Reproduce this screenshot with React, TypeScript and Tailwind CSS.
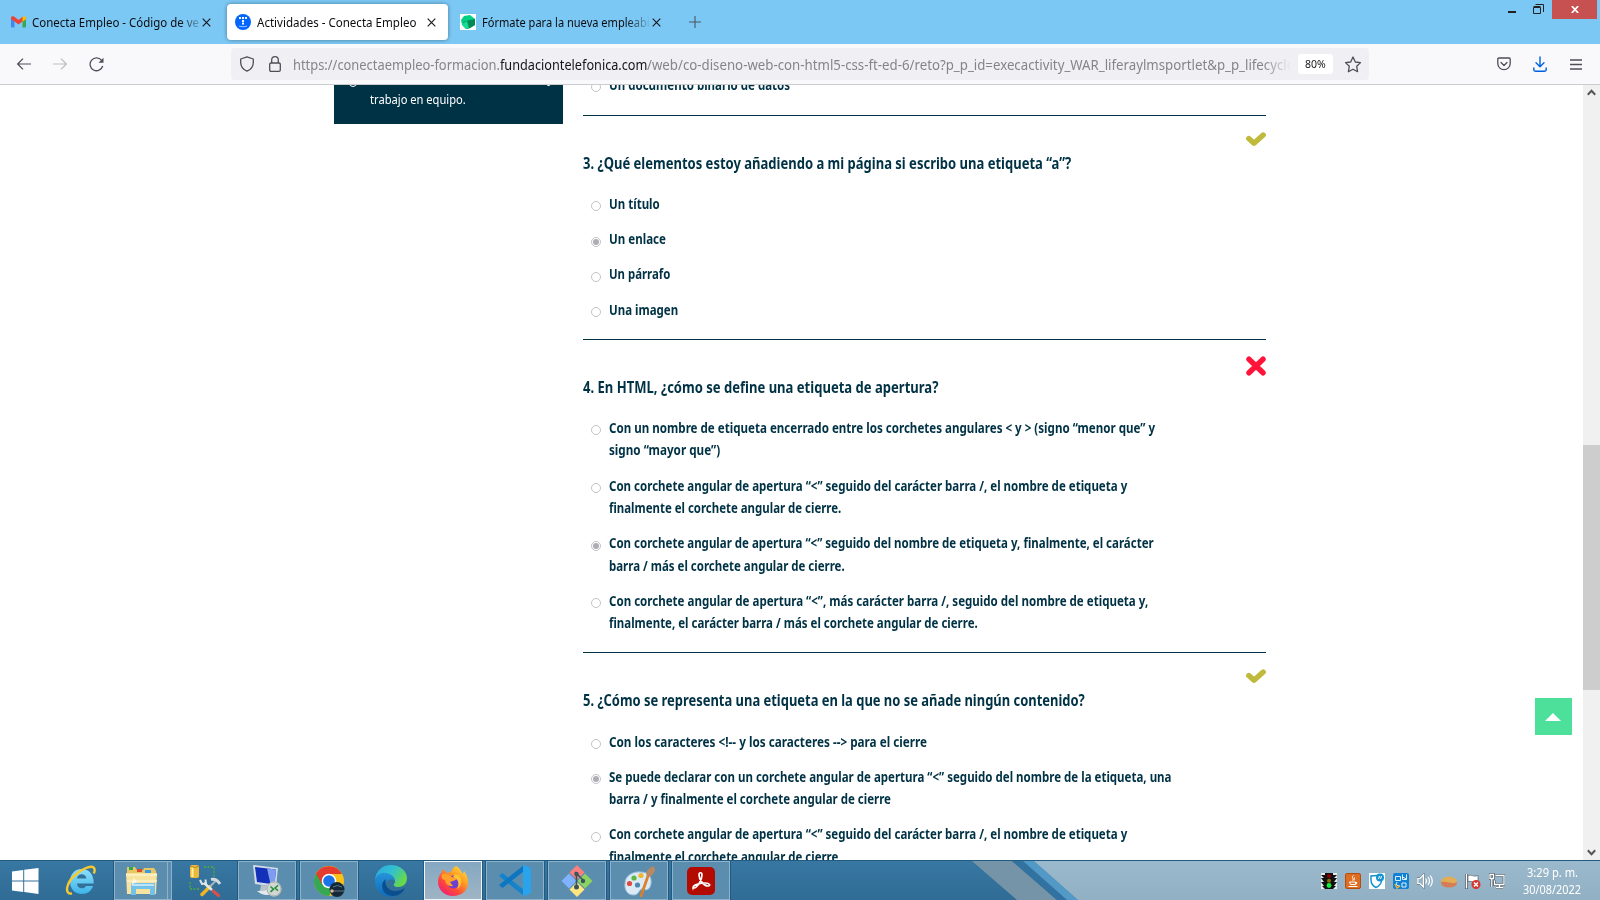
import { useLayoutEffect, useRef, useState } from 'react';
import type { ReactNode } from 'react';

/** Text set to an exact width by condensing or widening its glyphs. */
function Fit({ w, children }: { w: number; children: ReactNode }) {
  const ref = useRef<HTMLSpanElement>(null);
  const [scale, setScale] = useState(1);
  useLayoutEffect(() => {
    if (ref.current) setScale(w / ref.current.offsetWidth);
  }, [w]);
  return (
    <span className="block whitespace-nowrap" style={{ width: w }}>
      <span ref={ref} className="inline-block origin-left whitespace-pre" style={{ transform: `scaleX(${scale})` }}>
        {children}
      </span>
    </span>
  );
}

type Line = [string, number];
type Question = { ok: boolean; title: Line; checked: number; options: Line[][] };

const questions: Question[] = [
  {
    ok: true,
    title: ['3. ¿Qué elementos estoy añadiendo a mi página si escribo una etiqueta “a”?', 488],
    checked: 1,
    options: [[['Un título', 51]], [['Un enlace', 57]], [['Un párrafo', 61]], [['Una imagen', 69]]],
  },
  {
    ok: false,
    title: ['4. En HTML, ¿cómo se define una etiqueta de apertura?', 355.5],
    checked: 2,
    options: [
      [
        ['Con un nombre de etiqueta encerrado entre los corchetes angulares < y > (signo “menor que” y', 546],
        ['signo “mayor que”)', 111],
      ],
      [
        ['Con corchete angular de apertura “<” seguido del carácter barra /, el nombre de etiqueta y', 518.5],
        ['finalmente el corchete angular de cierre.', 232],
      ],
      [
        ['Con corchete angular de apertura “<” seguido del nombre de etiqueta y, finalmente, el carácter', 545],
        ['barra / más el corchete angular de cierre.', 236],
      ],
      [
        ['Con corchete angular de apertura “<”, más carácter barra /, seguido del nombre de etiqueta y,', 539.5],
        ['finalmente, el carácter barra / más el corchete angular de cierre.', 369],
      ],
    ],
  },
  {
    ok: true,
    title: ['5. ¿Cómo se representa una etiqueta en la que no se añade ningún contenido?', 502],
    checked: 1,
    options: [
      [['Con los caracteres <!-- y los caracteres --> para el cierre', 318.5]],
      [
        ['Se puede declarar con un corchete angular de apertura “<” seguido del nombre de la etiqueta, una', 562.5],
        ['barra / y finalmente el corchete angular de cierre', 282],
      ],
      [
        ['Con corchete angular de apertura “<” seguido del carácter barra /, el nombre de etiqueta y', 518.5],
        ['finalmente el corchete angular de cierre', 229],
      ],
    ],
  },
];

function Option({ lines, checked }: { lines: Line[]; checked?: boolean }) {
  return (
    <div className="flex pl-2">
      <span className="mt-[8.4px] flex size-[10px] shrink-0 items-center justify-center rounded-full border border-[#c3c3c9] bg-white">
        {checked && <span className="size-[6px] rounded-full bg-[#adadb6]" />}
      </span>
      <div className="ml-2 text-[14px] leading-[22.4px] font-bold text-[#003245]">
        {lines.map(([t, w]) => (
          <Fit key={t} w={w}>{t}</Fit>
        ))}
      </div>
    </div>
  );
}

function QuestionBlock({ q }: { q: Question }) {
  return (
    <section className="border-t border-[#003245] pb-[17.8px]">
      <div className="flex h-[34.8px] justify-end pt-4">
        {q.ok ? (
          <svg width="20" height="15" viewBox="0 0 20 15" fill="none" stroke="#bfba3b" strokeWidth="5.4" strokeLinecap="round" strokeLinejoin="round">
            <path d="M2.8 6.5 8 11.2 17.2 3" />
          </svg>
        ) : (
          <svg width="20" height="20" viewBox="0 0 20 20" fill="none" stroke="#ff1338" strokeWidth="5.4" strokeLinecap="round">
            <path d="M3 3.2 17 16.8M17 3.2 3 16.8" />
          </svg>
        )}
      </div>
      <h2 className="mb-[18.4px] text-[16px] leading-6 font-bold text-[#003245]">
        <Fit w={q.title[1]}>{q.title[0]}</Fit>
      </h2>
      <div className="flex flex-col gap-[12.8px]">
        {q.options.map((o, i) => (
          <Option key={i} lines={o} checked={i === q.checked} />
        ))}
      </div>
    </section>
  );
}

function CloseX({ className }: { className?: string }) {
  return (
    <svg className={className} width="9" height="9" viewBox="0 0 9 9" stroke="#15141a" strokeWidth="1.1">
      <path d="M.7.7 8.3 8.3M8.3.7.7 8.3" />
    </svg>
  );
}

function TitleBar() {
  return (
    <div className="flex h-11 bg-[#7cc8f5] text-[12.5px] text-[#0c0c10]">
      <div className="flex w-[227px] items-center pl-[11px]">
        <svg width="15" height="12" viewBox="0 0 15 12">
          <path d="M0 2v8.500a1 1 0 0 0 1 1h2.500V5z" fill="#4285f4" />
          <path d="M15 2v8.500a1 1 0 0 1-1 1h-2.500V5z" fill="#34a853" />
          <path d="M0 2C0 .2 1.800-.3 3 .6L7.500 4 12 .6V5L7.500 8.500 3.500 5.500 0 3z" fill="#ea4335" />
          <path d="M11.500.9C13-.3 15 .3 15 2v1.200l-3.500 2.600z" fill="#fbbc04" />
        </svg>
        <div className="ml-[6px] w-[167px] overflow-hidden pt-[2px] [mask-image:linear-gradient(to_right,black_148px,transparent_172px)]">
          <Fit w={167}>Conecta Empleo - Código de ve</Fit>
        </div>
        <CloseX className="ml-[3px]" />
      </div>
      <div className="mt-1 flex h-9 w-[221px] items-center rounded bg-white pl-2 shadow-[0_0_4px_rgba(0,0,0,0.4)]">
        <svg width="16" height="16" viewBox="0 0 16 16">
          <circle cx="8" cy="8" r="8" fill="#0066ff" />
          <path d="M4 3h2v2H4zM7 3h2v2H7zM10 3h2v2h-2zM7 6h2v2H7zM7 8.500h2v2H7z" fill="#fff" />
          <path d="M4 12.200q4 1.200 8 0" stroke="#9cc4ff" fill="none" />
        </svg>
        <div className="ml-[6px] w-[170px] pt-[2px]">
          <Fit w={159}>Actividades - Conecta Empleo</Fit>
        </div>
        <CloseX />
      </div>
      <div className="flex items-center pl-3">
        <svg width="16" height="16" viewBox="0 0 16 16">
          <path d="M0 0h16v16H0z" fill="#fff" />
          <path d="m4 2 6-1 5 4v6l-5 3-4 1-4-4-1-5z" fill="#00d084" />
          <path d="m3 8 7-2 5-1v6l-5 3-3 1z" fill="#008a55" />
          <path d="m2 10 5-3 2 7-3 1z" fill="#17dc92" />
        </svg>
        <div className="ml-[6px] w-[167px] overflow-hidden pt-[2px] [mask-image:linear-gradient(to_right,black_144px,transparent_170px)]">
          <Fit w={168}>Fórmate para la nueva empleabi</Fit>
        </div>
        <CloseX className="ml-[3px]" />
        <svg className="ml-[28px]" width="12" height="12" viewBox="0 0 12 12" stroke="#4d5660" strokeWidth="1.1">
          <path d="M6 0v12M0 6h12" />
        </svg>
      </div>
      <div className="ml-auto flex items-start pr-[3px]">
        <span className="mt-[11px] h-[2px] w-2 bg-[#222]" />
        <svg className="mt-1 mr-[8px] ml-[17px]" width="11" height="11" viewBox="0 0 11 11" fill="none" stroke="#222">
          <path d="M.5 3.500h7v6h-7zM.5 2.500h7" />
          <path d="M2.500 .5h8v7.500" />
        </svg>
        <span className="flex h-[19px] w-[45px] items-center justify-center bg-[#c75050]">
          <svg width="8" height="7" viewBox="0 0 8 7" stroke="#fff" strokeWidth="1.700">
            <path d="M.8 0 7.200 7M7.200 0 .8 7" />
          </svg>
        </span>
      </div>
    </div>
  );
}

function ToolBar() {
  return (
    <div className="relative z-10 flex h-[41px] items-center border-b border-[#cccccf] bg-[#f9f9fb]">
      <svg className="ml-[17px]" width="14" height="12" viewBox="0 0 14 12" fill="none" stroke="#4f4e58" strokeWidth="1.200">
        <path d="M14 6H.8M6 .6.7 6 6 11.400" />
      </svg>
      <svg className="ml-[22px]" width="14" height="12" viewBox="0 0 14 12" fill="none" stroke="#bdbdc2" strokeWidth="1.200">
        <path d="M0 6h13.200M8 .6 13.300 6 8 11.400" />
      </svg>
      <svg className="ml-[22px]" width="15" height="15" viewBox="0 0 15 15" fill="none" stroke="#4f4e58" strokeWidth="1.300">
        <path d="M12.600 3.400A6.400 6.400 0 1 0 13.700 9" />
        <path d="M14.500.8v5H9.500z" fill="#4f4e58" stroke="none" />
      </svg>
      <div className="ml-[127px] flex h-8 w-[1138px] items-center rounded bg-[#f0f0f4] pl-[9px]">
        <svg width="14" height="16" viewBox="0 0 14 16" fill="none" stroke="#4f4e58" strokeWidth="1.300">
          <path d="M7 .8 13.300 3v3.500c0 4-2.300 7-6.300 8.700C3 13.500.7 10.500.7 6.500V3z" strokeLinejoin="round" />
        </svg>
        <svg className="ml-[15px]" width="12" height="16" viewBox="0 0 12 16" fill="none" stroke="#4f4e58" strokeWidth="1.300">
          <rect x=".7" y="7" width="10.600" height="8.300" rx="1.300" />
          <path d="M2.700 7V4a3.300 3.300 0 0 1 6.600 0v3" />
        </svg>
        <div className="ml-[12px] flex w-[998px] overflow-hidden pt-[2px] text-[14.5px] text-[#84848a] [mask-image:linear-gradient(to_right,black_970px,transparent_998px)]">
          <Fit w={207}>https://conectaempleo-formacion.</Fit>
          <span className="text-[#15141a]">
            <Fit w={147}>fundaciontelefonica.com</Fit>
          </span>
          <Fit w={647}>/web/co-diseno-web-con-html5-css-ft-ed-6/reto?p_p_id=execactivity_WAR_liferaylmsportlet&p_p_lifecycle</Fit>
        </div>
        <span className="ml-[7px] flex h-5 w-[35px] items-center justify-center rounded-[3px] bg-white pt-px text-[11px] text-[#15141a]">
          <Fit w={21}>80%</Fit>
        </span>
        <svg className="ml-[11px]" width="18" height="17" viewBox="0 0 18 17" fill="none" stroke="#4f4e58" strokeWidth="1.300" strokeLinejoin="round">
          <path d="m9 1 2.300 5 5.200.6-3.800 3.700.9 5.400L9 13.200l-4.600 2.500.9-5.400L1.500 6.600 6.700 6z" />
        </svg>
      </div>
      <svg className="ml-[128px]" width="14" height="14" viewBox="0 0 14 14" fill="none" stroke="#4f4e58" strokeWidth="1.300" strokeLinecap="round" strokeLinejoin="round">
        <path d="M1.800 1h10.400a1 1 0 0 1 1 1v4.500a6.200 6.200 0 0 1-12.400 0V2a1 1 0 0 1 1-1zM4 5.500l3 3 3-3" />
      </svg>
      <svg className="ml-[22px]" width="14" height="16" viewBox="0 0 14 16" fill="none" stroke="#0061e0" strokeWidth="1.400" strokeLinecap="round" strokeLinejoin="round">
        <path d="M7 1v9.500M3 6.700l4 4 4-4M.8 12v1.500q0 1.700 1.700 1.700h9q1.700 0 1.700-1.700V12" />
      </svg>
      <svg className="ml-[23px]" width="12" height="11" viewBox="0 0 12 11" stroke="#4f4e58" strokeWidth="1.300">
        <path d="M0 1h12M0 5.500h12M0 10h12" />
      </svg>
    </div>
  );
}

function Page() {
  return (
    <div className="relative flex h-[775px] overflow-hidden bg-white">
      <aside className="ml-[334px] h-[39px] w-[229px] shrink-0 overflow-hidden bg-[#003245] text-[13px] leading-[20.8px] text-white">
        <div className="-mt-[17px] flex pl-[15px]">
          <span className="mt-[11px] size-[8px] rounded-full border border-white" />
          <div className="ml-[13px]">
            <Fit w={184}>Habilidades de comunicación y</Fit>
            <Fit w={96}>trabajo en equipo.</Fit>
          </div>
        </div>
      </aside>
      <main className="-mt-[11px] ml-5 w-[683px] shrink-0">
        <div className="pb-[18.4px]">
          <Option lines={[['Un documento binario de datos', 181]]} />
        </div>
        {questions.map((q) => (
          <QuestionBlock key={q.title[0]} q={q} />
        ))}
      </main>
      <button className="absolute top-[613px] left-[1535px] flex size-[37px] items-center justify-center bg-[#4ce09b]">
        <svg className="mr-px" width="16" height="8" viewBox="0 0 16 8" fill="#fff">
          <path d="M8 0l8 8H0z" />
        </svg>
      </button>
      <div className="ml-auto flex w-[17px] flex-col items-center bg-[#f0f0f0]">
        <svg className="mt-[4px]" width="9" height="7" viewBox="0 0 9 7" fill="none" stroke="#555" strokeWidth="2">
          <path d="M.8 5.800 4.500 1.800 8.200 5.800" />
        </svg>
        <div className="mt-[349px] h-[245px] w-full bg-[#cdcdcd]" />
        <svg className="mt-auto mb-[4px]" width="9" height="7" viewBox="0 0 9 7" fill="none" stroke="#555" strokeWidth="2">
          <path d="M.8 1.200 4.500 5.200 8.200 1.200" />
        </svg>
      </div>
    </div>
  );
}

function TaskButton({ children, active }: { children: ReactNode; active?: boolean }) {
  return (
    <span
      className={
        active
          ? 'flex h-[39px] w-[58px] shrink-0 items-center justify-center border border-[#eef4f8] bg-linear-to-b from-[#84a8c2] to-[#9fb4c4] outline outline-[#235b80]'
          : 'flex h-[39px] w-[58px] shrink-0 items-center justify-center border border-[#8cb2cc] bg-[#5b8dae] outline outline-[#235b80]'
      }
    >
      {children}
    </span>
  );
}

function TaskBar() {
  return (
    <div className="relative flex h-10 items-center border-t border-[#235b80] bg-linear-to-b from-[#3777a2] to-[#306c95]">
      <svg className="absolute top-0 left-[960px] h-[39px] w-[640px]" viewBox="0 0 640 39" preserveAspectRatio="none">
        <defs>
          <linearGradient id="glass" x1="0" y1="0" x2="0" y2="1">
            <stop offset="0" stopColor="#9bb9cd" />
            <stop offset="1" stopColor="#92b0c3" />
          </linearGradient>
        </defs>
        <path d="M12 0h40l45 39H57z" fill="#7694a8" />
        <path d="M52 0h11l44 39H97z" fill="#3272a0" />
        <path d="M63 0h11l44 39h-11z" fill="#5299c8" />
        <path d="M74 0h566v39H118z" fill="url(#glass)" />
      </svg>
      <svg className="ml-3 shrink-0" width="27" height="26" viewBox="0 0 27 26" fill="#fff">
        <path d="M0 3.600 11.200 2v10.500H0zM12.200 1.800 26.500 0v12.500H12.200zM0 13.500h11.200V24L0 22.400zM12.200 13.500h14.300V26l-14.300-1.900z" />
      </svg>
      <svg className="ml-[26px] shrink-0" width="32" height="32" viewBox="0 0 32 32" fill="none">
        <defs>
          <linearGradient id="ie" x1="0" y1="0" x2="0" y2="1">
            <stop offset="0" stopColor="#8fe0fb" />
            <stop offset="1" stopColor="#3cb4e8" />
          </linearGradient>
        </defs>
        <path
          d="M16.500 4C9.500 4 5 9.500 5 16.500 5 23.500 9.500 29 17 29c5.500 0 9.500-3 11-8h-7c-.8 1.500-2 2.300-4 2.300-3 0-5-1.800-5-4.800h16.700C29 10 24.500 4 16.500 4zM12 13.500c.3-2.500 2-4.300 4.700-4.300s4.500 1.700 4.700 4.300z"
          fill="url(#ie)"
          fillRule="evenodd"
        />
        <path d="M7 28.500C-1 30 1 17 11 9.500 19 2.500 28-.5 29.500 4c.4 1.500 0 3-.8 4.500" stroke="#f7c92d" strokeWidth="2.400" />
      </svg>
      <div className="ml-[17px] flex shrink-0">
        <span className="flex h-[39px] w-[54px] items-center justify-center border border-[#8cb2cc] bg-[#5b8dae] outline outline-[#235b80]">
          <svg width="33" height="30" viewBox="0 0 33 30">
            <path d="M2 1h8l2 3h6l1-2h10l2 3v23H2z" fill="#e8c664" />
            <path d="M4 1h4v3H4z" fill="#2fa84f" />
            <path d="M12 3h5v3h-5z" fill="#d84a32" />
            <path d="M20 4h6v3h-6z" fill="#3a9be0" />
            <path d="M1 7h31l-1 21H2z" fill="#f7e3a0" />
            <path d="M1 9h31M2 15h30" stroke="#fff2c4" strokeWidth="1.500" />
            <path d="M6 29V17h24v12h-5v-6H11v6z" fill="#74c1ea" />
            <path d="M7 18h22v2H7z" fill="#bde4f7" />
            <path d="m9 12-3 7 6-3z" fill="#fff" opacity=".7" />
          </svg>
        </span>
        <span className="h-[39px] w-1 border border-l-0 border-[#8cb2cc] bg-[#5b8dae]" />
      </div>
      <svg className="ml-[17px] shrink-0" width="33" height="33" viewBox="0 0 33 33" fill="none">
        <path d="M15 3h10v10M1 18v7h9" stroke="#4caf32" strokeWidth="1.300" strokeDasharray="2 1.500" />
        <rect x="1" y="1" width="9" height="13" rx="2" fill="#edb93c" />
        <path d="M3.500 3v10" stroke="#fff0a0" strokeWidth="2" />
        <path d="M1.500 2.500q4 1.800 8 0" stroke="#b98618" />
        <path d="m13 30.500 8-8" stroke="#efb624" strokeWidth="3.500" strokeLinecap="round" />
        <path d="m21 22.500 6-6" stroke="#aab4ba" strokeWidth="2" />
        <path d="m15 19 8 7" stroke="#e4e9ec" strokeWidth="2.400" />
        <path d="m24 27 5.500 4.500" stroke="#d9534a" strokeWidth="3" strokeLinecap="round" />
        <path d="m11 16 2 4 4-.5-.5-4" stroke="#dfe5e9" strokeWidth="2" />
        <path d="M22 15.500q5-1.500 9 4.500" stroke="#d3dade" strokeWidth="3" />
      </svg>
      <div className="ml-4 flex shrink-0 gap-1">
        <TaskButton>
          <svg width="32" height="32" viewBox="0 0 32 32">
            <path d="m2 0 25 3-2 19L4 19z" fill="#cfdbe6" />
            <path d="m4 2 21 2.500-1.500 15L6 17z" fill="#1230b8" />
            <path d="m16 3.500 9 1-1.500 15-4-.6z" fill="#7e9df0" />
            <path d="m10 20 7 1 1 4-9 1z" fill="#b9c3ca" />
            <path d="M6 26q7 6 15 3l-1-5q-7 2-14 2z" fill="#e4e9ec" />
            <circle cx="23" cy="24" r="7.500" fill="#d3d7d4" />
            <circle cx="23" cy="24" r="7" fill="none" stroke="#a7aeaa" />
            <path d="m19.500 21.500 3 2.700-3 2.700m7.500-6.600-3 2.700 3 2.700" stroke="#25913e" strokeWidth="1.600" fill="none" />
          </svg>
        </TaskButton>
        <TaskButton>
          <svg width="32" height="32" viewBox="0 0 32 32">
            <circle cx="16" cy="16" r="15" fill="#fbc116" />
            <path d="M3 8.500A15 15 0 0 0 16 31l6.500-11.200L16 16z" fill="#34a853" />
            <path d="M3 8.500 9.500 20 16 9h13A15 15 0 0 0 3 8.500z" fill="#e33b2e" />
            <circle cx="16" cy="16" r="7.300" fill="#fff" />
            <circle cx="16" cy="16" r="5.800" fill="#1a73e8" />
            <circle cx="24" cy="24.500" r="7.500" fill="#15283a" />
            <path d="M17 26h15M20 22q4-3 9 0" stroke="#5e7c82" fill="none" />
            <circle cx="19" cy="26" r="1.700" fill="#d9b58b" />
          </svg>
        </TaskButton>
      </div>
      <svg className="ml-[17px] shrink-0" width="32" height="32" viewBox="0 0 32 32">
        <defs>
          <linearGradient id="edgeTop" x1="0" y1="0" x2="1" y2=".5">
            <stop offset="0" stopColor="#2ba8e0" />
            <stop offset=".55" stopColor="#32c0cf" />
            <stop offset="1" stopColor="#67d94b" />
          </linearGradient>
          <linearGradient id="edgeLeft" x1="0" y1="0" x2="0" y2="1">
            <stop offset="0" stopColor="#2794da" />
            <stop offset="1" stopColor="#0f6cbd" />
          </linearGradient>
        </defs>
        <path d="M0 16C0 10 4 7 10 7c6 0 10 4 10 9-4-4-9-1-9 4 0 6 6 10 12 10C12 35 0 28 0 16z" fill="url(#edgeLeft)" />
        <path d="M11 14c-2 6 2 12 9 12 4 0 7-1 10-3-4 9-14 10-20 5-4-4-4-11 1-14z" fill="#0b4f8e" />
        <path d="M0 15C1 6 7 0 16 0c9 0 16 6 16 13 0 6-4 9-9 9-3 0-5-1-4-3 3-3 0-10-8-11C6 7 1 10 0 15z" fill="url(#edgeTop)" />
      </svg>
      <div className="ml-[17px] flex shrink-0 gap-1">
        <TaskButton active>
          <svg width="32" height="32" viewBox="0 0 32 32">
            <defs>
              <linearGradient id="fox" x1="1" y1="0" x2=".2" y2="1">
                <stop offset="0" stopColor="#fff044" />
                <stop offset=".4" stopColor="#ff9c22" />
                <stop offset=".7" stopColor="#ff4a3a" />
                <stop offset="1" stopColor="#ee1a78" />
              </linearGradient>
            </defs>
            <path d="M19 1c5 3 5 6 7 8l1-3c3 4 4 8 4 11 0 9-7 14-15 14S1 25 1 17c0-5 2-8 4-10l1-3 4 4 4-1c1-3 3-5 5-6z" fill="url(#fox)" />
            <circle cx="16.500" cy="17" r="6.500" fill="#6f3fd0" />
            <path d="M5 9c4-1 7 0 10 3l5 1c-1 3-5 3-7 4l3 4c-5 1-8-3-8-6-3 0-4-3-3-6z" fill="#ffa128" />
            <path d="M18 9c5 1 7 5 6 10-1 2-2 4-4 5 3-6 1-10-4-12z" fill="#ffc233" />
          </svg>
        </TaskButton>
        <TaskButton>
          <svg width="33" height="33" viewBox="0 0 33 33">
            <path d="M0 12 3.500 9 25 26v6z" fill="#1583cc" />
            <path d="M0 21 3.500 24 25 7V1z" fill="#0c76c2" />
            <path d="m24 .5 8 3.500v25l-8 3.500z" fill="#29a3ec" />
          </svg>
        </TaskButton>
        <TaskButton>
          <svg width="32" height="32" viewBox="0 0 32 32">
            <path d="m16 0 7.500 7.500L16 15 8.500 7.500z" fill="#fa7f7f" />
            <path d="m8 8.500 7.500 7.500L8 23.500.5 16z" fill="#80b3ff" />
            <path d="m24 8.500 7.500 7.500-7.500 7.500-7.500-7.500z" fill="#8dd35f" />
            <path d="m16 17 7.500 7.500L16 32l-7.500-7.500z" fill="#ffe680" />
            <path d="M15.500 8v15M14 7l8 8" stroke="#37555f" strokeWidth="1.600" />
            <circle cx="15.500" cy="9" r="2.200" fill="#37555f" />
            <circle cx="22" cy="16" r="2.200" fill="#37555f" />
            <circle cx="15.500" cy="22" r="2.500" fill="#37555f" />
          </svg>
        </TaskButton>
        <TaskButton>
          <svg width="32" height="32" viewBox="0 0 32 32">
            <path d="M2 18C2 11 10 6 18 7c8 0 11 5 10 12-1 6-5 7-8 5-4-1-4 7-10 6-6 0-9-6-8-12z" fill="#dbeaf5" stroke="#8fb9da" />
            <circle cx="6.500" cy="18.500" r="2.600" fill="#df4a3f" />
            <circle cx="11" cy="13" r="2.600" fill="#5db743" />
            <circle cx="18" cy="10.500" r="2.600" fill="#f1b62c" />
            <circle cx="14.500" cy="20" r="2.600" fill="#4e88b3" />
            <path d="m18 31 7-20" stroke="#d9822b" strokeWidth="2.800" strokeLinecap="round" />
            <path d="M24 11q-3-5 6-10 5 4-3 11z" fill="#b98a62" />
          </svg>
        </TaskButton>
        <TaskButton>
          <svg width="28" height="28" viewBox="0 0 28 28">
            <rect width="28" height="28" rx="5" fill="#b30b00" />
            <path d="M6 21c-1-3 8-5 12-5 5 0 6 3 3 3-4 0-9-6-9-11 0-3 3-3 3 0 0 5-5 13-8 13-.6 0-.9-.3-1 0z" fill="none" stroke="#fff" strokeWidth="1.700" />
          </svg>
        </TaskButton>
      </div>
      <div className="relative ml-auto flex items-center gap-2 pr-[18px]">
        <svg width="16" height="16" viewBox="0 0 16 16">
          <path d="M0 0h16v16H0z" fill="#e8ece8" />
          <path d="M4 0h8v2h4l-3 3h3l-3 4h3l-3 4h2l-3 3H4l-3-3h2L0 9h3L0 5h3L0 2h4z" fill="#111" />
          <circle cx="8" cy="3" r="2" fill="#8c0000" />
          <circle cx="8" cy="7.700" r="2" fill="#857500" />
          <circle cx="8" cy="12.500" r="2.400" fill="#12f03c" />
        </svg>
        <svg width="16" height="16" viewBox="0 0 16 16" fill="none" stroke="#fff">
          <rect x=".5" y=".5" width="15" height="15" rx="1.500" fill="#dd6d20" stroke="#b44d10" />
          <path d="M8.500 2.500c-3 2 1 3-1 5M10 4.500c-2 1 0 2-1 3M4.500 9h6v2.500h-5zM11 9.300q2 0 0 2M3.500 13.500h9" />
        </svg>
        <svg width="16" height="16" viewBox="0 0 16 16" fill="none">
          <path d="M0 0h16v16H0z" fill="#fff" />
          <path d="M8 2.500 2 3v4c0 4 2 6 5 7.500C10 13 12 11 12.500 8" stroke="#1393cf" strokeWidth="1.500" />
          <circle cx="11" cy="4.500" r="4" fill="#1393cf" />
          <path d="m9.500 6 1-3m1 3 1-3" stroke="#fff" />
        </svg>
        <svg width="16" height="16" viewBox="0 0 16 16" fill="none">
          <rect width="16" height="16" rx="2" fill="#1381d3" />
          <path d="M2.500 3.500h5v4h-5zM9.500 1.500v5h4v-5M9.500 4l4 2M4 9q-2 4 3 4M9 10h4v4H9z" stroke="#d8f0ff" />
          <path d="m2 11 2 4 3-2" stroke="#f3b22b" strokeWidth="1.500" />
        </svg>
        <svg width="16" height="16" viewBox="0 0 16 16" fill="none" stroke="#fff" strokeWidth="1.200">
          <path d="M.8 5.500h2L6.500 2v12L2.800 10.500h-2z" stroke="#52616b" strokeWidth="2" />
          <path d="M.8 5.500h2L6.500 2v12L2.800 10.500h-2z" fill="#9ab2c0" />
          <path d="M8.500 5.500q2 2.500 0 5M11 4q3 4 0 8M13.300 2.500q4 5.500 0 11" />
        </svg>
        <svg width="16" height="16" viewBox="0 0 16 16">
          <ellipse cx="8" cy="10" rx="8" ry="4.500" fill="#d77d55" />
          <path d="M0 9c0-7 16-7 16 0-5 3-8-1-16 0z" fill="#e2ad55" />
        </svg>
        <svg width="16" height="16" viewBox="0 0 16 16" fill="none">
          <path d="M1.500 1v15" stroke="#46525a" strokeWidth="3" />
          <path d="M1.500 1v14.500" stroke="#fff" strokeWidth="1.500" />
          <path d="M3 2.500c4-1.500 5 2 10 0v6c-4 2-6-1-10 0z" fill="#fff" stroke="#52616b" strokeWidth=".7" />
          <circle cx="11" cy="11.500" r="4.500" fill="#d7352f" />
          <path d="m9 9.500 4 4m0-4-4 4" stroke="#fff" strokeWidth="1.500" />
        </svg>
        <svg width="16" height="16" viewBox="0 0 16 16" fill="none">
          <path d="M6.500 2.500h8.500v9H5.500v-4M10.500 11.500v3M7 14.500h7M1 1.500h3.500v4H1zM2.800 5.500v8.500" stroke="#43525c" strokeWidth="2.600" />
          <path d="M6.500 2.500h8.500v9H5.500v-4M10.500 11.500v3M7 14.500h7M1 1.500h3.500v4H1zM2.800 5.500v8.500" stroke="#fff" strokeWidth="1.300" />
        </svg>
        <div className="ml-[9px] flex w-[60px] flex-col items-center text-[12px] leading-[17px] text-white">
          <Fit w={51}>3:29 p. m.</Fit>
          <Fit w={58}>30/08/2022</Fit>
        </div>
      </div>
    </div>
  );
}

export default function App() {
  return (
    <div className="flex h-[900px] w-[1600px] flex-col overflow-hidden bg-white font-['Noto_Sans',sans-serif]">
      <TitleBar />
      <ToolBar />
      <Page />
      <TaskBar />
    </div>
  );
}
